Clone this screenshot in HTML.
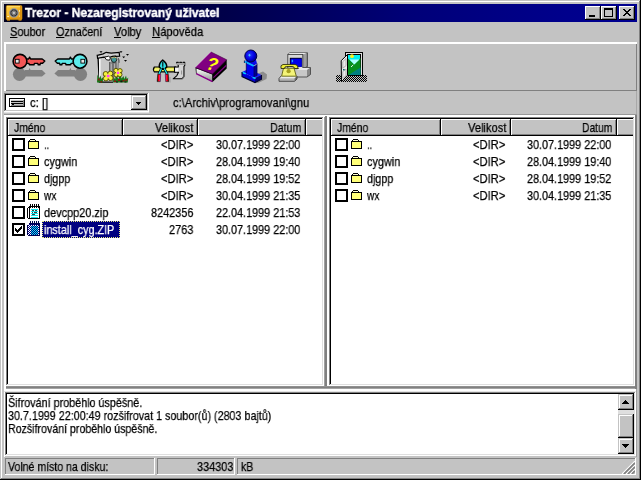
<!DOCTYPE html>
<html lang="cs"><head><meta charset="utf-8"><title>Trezor - Nezaregistrovaný uživatel</title>
<style>
html,body{margin:0;padding:0}
body{width:641px;height:480px;overflow:hidden;background:#c3c3c3;position:relative;font-family:"Liberation Sans",sans-serif}
#w{position:absolute;left:0;top:0;width:641px;height:480px;overflow:hidden;background:#c3c3c3}
#w div,#w svg,#w span.t{position:absolute}
#w span.t{white-space:pre;line-height:16px;height:16px;will-change:transform;-webkit-text-stroke:0.25px}
#w u{text-decoration:underline;text-underline-offset:1px}
</style></head><body><div id="w">
<div style="left:1px;top:1px;width:639px;height:1px;background:#fff;"></div>
<div style="left:1px;top:1px;width:1px;height:478px;background:#fff;"></div>
<div style="left:1px;top:478px;width:639px;height:1px;background:#808080;"></div>
<div style="left:639px;top:1px;width:1px;height:478px;background:#808080;"></div>
<div style="left:0px;top:479px;width:641px;height:1px;background:#000;"></div>
<div style="left:640px;top:0px;width:1px;height:480px;background:#000;"></div>
<div style="left:4px;top:4px;width:633px;height:18px;background:linear-gradient(to right,#00001e 0%,#00004a 35%,#000078 64%,#00008c 89%,#000090 100%);"></div>
<svg style="left:5px;top:4px" width="18" height="18" viewBox="5 4 18 18">
<defs><linearGradient id="sg" x1="0" y1="0" x2="1" y2="1"><stop offset="0" stop-color="#ffd040"/><stop offset="1" stop-color="#e89c10"/></linearGradient>
<radialGradient id="dg"><stop offset="0" stop-color="#f0f0f0"/><stop offset=".35" stop-color="#707070"/><stop offset=".7" stop-color="#303030"/><stop offset="1" stop-color="#909090"/></radialGradient></defs>
<rect x="7" y="19" width="3" height="1.6" fill="#d89010"/><rect x="18.5" y="19" width="3" height="1.6" fill="#d89010"/>
<rect x="6.2" y="5.6" width="15.8" height="14" rx="1.2" fill="url(#sg)" stroke="#c88808" stroke-width=".6"/>
<rect x="20" y="6" width="1.6" height="13" fill="#d89010"/>
<rect x="7" y="17.6" width="14" height="1.2" fill="#d89010"/>
<rect x="7.2" y="16" width="1.8" height=".9" fill="#fff2c0"/>
<circle cx="13.900" cy="12.900" r="4.400" fill="url(#dg)" stroke="#9a9aa0" stroke-width=".800"/>
<path d="M13.900 9.500v6.800M10.500 12.900h6.800M11.500 10.500l4.800 4.800M16.300 10.500l-4.800 4.800" stroke="#c8c8c8" stroke-width=".500" opacity=".700"/>
<rect x="7" y="6.200" width="13" height="1" fill="#ffe070"/>
<rect x="19" y="10" width=".900" height="1.800" fill="#fff0b0"/><rect x="19" y="15.600" width=".900" height=".900" fill="#fff0b0"/>
</svg>
<span class="t" style="left:24.50px;top:4.50px;font-size:13px;font-weight:bold;color:#fff;transform:scale(0.9242,1.0);transform-origin:0 0;-webkit-text-stroke:0.45px #fff;">Trezor - Nezaregistrovaný uživatel</span>
<div style="left:585px;top:6px;width:16px;height:14px;background:#c3c3c3;"></div>
<div style="left:585px;top:6px;width:15px;height:1px;background:#fff;"></div>
<div style="left:585px;top:6px;width:1px;height:13px;background:#fff;"></div>
<div style="left:585px;top:19px;width:16px;height:1px;background:#000;"></div>
<div style="left:600px;top:6px;width:1px;height:14px;background:#000;"></div>
<div style="left:586px;top:18px;width:14px;height:1px;background:#808080;"></div>
<div style="left:599px;top:7px;width:1px;height:12px;background:#808080;"></div>
<div style="left:601px;top:6px;width:16px;height:14px;background:#c3c3c3;"></div>
<div style="left:601px;top:6px;width:15px;height:1px;background:#fff;"></div>
<div style="left:601px;top:6px;width:1px;height:13px;background:#fff;"></div>
<div style="left:601px;top:19px;width:16px;height:1px;background:#000;"></div>
<div style="left:616px;top:6px;width:1px;height:14px;background:#000;"></div>
<div style="left:602px;top:18px;width:14px;height:1px;background:#808080;"></div>
<div style="left:615px;top:7px;width:1px;height:12px;background:#808080;"></div>
<div style="left:619px;top:6px;width:16px;height:14px;background:#c3c3c3;"></div>
<div style="left:619px;top:6px;width:15px;height:1px;background:#fff;"></div>
<div style="left:619px;top:6px;width:1px;height:13px;background:#fff;"></div>
<div style="left:619px;top:19px;width:16px;height:1px;background:#000;"></div>
<div style="left:634px;top:6px;width:1px;height:14px;background:#000;"></div>
<div style="left:620px;top:18px;width:14px;height:1px;background:#808080;"></div>
<div style="left:633px;top:7px;width:1px;height:12px;background:#808080;"></div>
<div style="left:589px;top:15px;width:6px;height:2px;background:#000;"></div>
<div style="left:604px;top:8px;width:9px;height:9px;background:#000;"></div>
<div style="left:605px;top:10px;width:7px;height:6px;background:#c3c3c3;"></div>
<svg style="left:623px;top:9px" width="8" height="7" viewBox="0 0 8 7" shape-rendering="crispEdges"><path d="M0 0h2v1h-2zM6 0h2v1h-2zM1 1h2v1h-2zM5 1h2v1h-2zM2 2h4v1h-4zM3 3h2v1h-2zM2 4h4v1h-4zM1 5h2v1h-2zM5 5h2v1h-2zM0 6h2v1h-2zM6 6h2v1h-2z" fill="#000"/></svg>
<span class="t" style="left:9.50px;top:23.50px;font-size:13px;color:#000;transform:scale(0.8421,1.0);transform-origin:0 0;"><u>S</u>oubor</span>
<span class="t" style="left:55.50px;top:23.50px;font-size:13px;color:#000;transform:scale(0.8321,1.0);transform-origin:0 0;"><u>O</u>značení</span>
<span class="t" style="left:113.50px;top:23.50px;font-size:13px;color:#000;transform:scale(0.8585,1.0);transform-origin:0 0;"><u>V</u>olby</span>
<span class="t" style="left:151.50px;top:23.50px;font-size:13px;color:#000;transform:scale(0.8656,1.0);transform-origin:0 0;"><u>N</u>ápověda</span>
<div style="left:4px;top:42px;width:633px;height:2px;background:#fff;"></div>
<div style="left:4px;top:42px;width:2px;height:49px;background:#fff;"></div>
<div style="left:6px;top:90px;width:631px;height:1px;background:#808080;"></div>
<div style="left:636px;top:44px;width:1px;height:47px;background:#808080;"></div>
<div style="left:636px;top:91px;width:1px;height:24px;background:#a8a8a8;"></div>
<svg style="left:0;top:44px" width="641" height="46" viewBox="0 44 641 46">
<defs>
<pattern id="chk" width="2" height="2" patternUnits="userSpaceOnUse"><rect width="2" height="2" fill="#c0c0c0"/><rect width="1" height="1" fill="#000"/><rect x="1" y="1" width="1" height="1" fill="#000"/></pattern>
<g id="key">
 <circle cx="19.5" cy="74.3" r="6.6" fill="#808080"/>
 <path d="M25 70h3.6l1-2 1 2h11.4l3.6 3.4-3.6 3.2h-17z" fill="#808080"/>
</g>
<g id="keyb">
 <path d="M26 59h2.6l1-1.8 1 1.8h11.6l2.6 2-2.2 2.2h-2.2l-.4 1.6h-1.8l-.4-1.4h-3.4l-.4 1.4h-4.6l-.6-1.4h-2.8z" stroke="#000" stroke-width="1.400" stroke-linejoin="round"/>
 <circle cx="20" cy="61.300" r="6.900" stroke="#000" stroke-width="1.600"/>
 <rect x="15.3" y="59.3" width="3.8" height="3.8" fill="#e8e8e8" stroke="#000" stroke-width=".9"/>
</g>
<radialGradient id="ball" cx=".4" cy=".4" r=".65"><stop offset="0" stop-color="#2838ff"/><stop offset=".6" stop-color="#0000e0"/><stop offset="1" stop-color="#000070"/></radialGradient>
<linearGradient id="hl"><stop offset="0" stop-color="#300000"/><stop offset=".450" stop-color="#ff0000"/><stop offset="1" stop-color="#ff30ff"/></linearGradient>
<linearGradient id="hr"><stop offset="0" stop-color="#ff20d0"/><stop offset=".500" stop-color="#ff0000"/><stop offset="1" stop-color="#300000"/></linearGradient>
<linearGradient id="pg" x1="0" y1="0" x2="0" y2="1"><stop offset="0" stop-color="#fff"/><stop offset="1" stop-color="#909090"/></linearGradient>
</defs>
<!-- red key -->
<use href="#key"/>
<use href="#keyb" fill="#f25656"/>
<!-- cyan key (mirrored) -->
<g transform="translate(100 0) scale(-1 1)"><use href="#key"/><use href="#keyb" fill="#5ceaea"/></g>

<!-- trash with flowers -->
<g>
 <path d="M98 57L99.3 82h18.2l1-25z" fill="#c8c8c8"/>
 <path d="M98 56.5L99.3 82.2H113" fill="none" stroke="#000" stroke-width="1.3"/>
 <path d="M99.8 58v23" stroke="#fff" stroke-width="1.4"/>
 <path d="M118.4 58l-.6 14" stroke="#707070" stroke-width="1"/>
 <rect x="109" y="62" width="7.400" height="19.500" fill="#8c8c8c"/>
 <path d="M109.600 62v19.500M113 62v19.500M116 62v19.500" stroke="#606060" stroke-width="1.100"/><path d="M111.300 64v17M114.600 64v17" stroke="#b8b8b8" stroke-width=".900"/>
 <path d="M97.2 55.3l6-1.4 3-1.6 5 .8 8-.6.4 3.6-8 .4-3 1.2-5-.6-6 1.2z" fill="#d0d0d0" stroke="#000" stroke-width="1.200"/>
 <path d="M104.5 57.2l4-1 2 1.6-1 2.4-3-.4z" fill="#fff" stroke="#000" stroke-width=".9"/>
 <path d="M118 58.5q1.8 1.8 1 4.2" fill="none" stroke="#606060" stroke-width="1.3"/>
 <circle cx="114" cy="59.700" r="2.700" fill="#409898" stroke="#181818" stroke-width=".900"/>
 <path d="M111.600 58.200q2.400-2.600 5-.200" fill="none" stroke="#e8e090" stroke-width=".900"/>
 <path d="M111 57.4l1.2-1.2 3.4-.2 1.6 1.4" fill="none" stroke="#000" stroke-width=".8"/>
 <!-- flies -->
 <path d="M99.5 51.3h3l-1.5 1.8zM119.5 51.3h3l-1.5 1.8zM126 54h3l-1.5 1.8zM122.2 56.4h3l-1.5 1.8zM124 60h3l-1.5 1.8z" fill="#000"/>
 <!-- grass -->
 <path d="M97 82.5l.4-8 1.6 4 1.4-3 1 3.4 1.8-2-.4 5.6z" fill="#187818"/>
 <path d="M113 82.6l.6-5 1.8 2 1-4 2 3.4 1.6-5 1.6 4.4 1.8-2.4 1 3 1.6-3.6.8 3.6 1.4-1.4-.4 5z" fill="#187818"/>
 <path d="M114 80.5h2v1.6h-2zM118 79h2v2h-2zM122.5 80h2v1.6h-2zM98 78.5h1.6v2H98zM100.5 81h1.6v1.4h-1.6zM125.5 79h1.6v2h-1.6z" fill="#901010"/>
 <path d="M116 81.4h2v1.2h-2zM120.4 80.6h2v1.6h-2zM124.5 81.6h2v1h-2z" fill="#101010"/>
 <!-- flowers -->
 <g fill="#f4f040" stroke="#504800" stroke-width=".900">
  <circle cx="105.7" cy="74" r="2.5"/><circle cx="110.3" cy="73.6" r="2.5"/><circle cx="105.9" cy="78.4" r="2.5"/><circle cx="110.6" cy="78" r="2.5"/>
  <circle cx="116" cy="70.5" r="2.2"/><circle cx="120" cy="70.8" r="2.2"/><circle cx="116.2" cy="74.8" r="2.2"/><circle cx="119.8" cy="74.6" r="2.2"/>
 </g>
 <rect x="105.6" y="73.8" width="5" height="4.6" fill="#f4f040"/><rect x="116" y="70.6" width="4" height="4.2" fill="#f4f040"/>
 <rect x="106.9" y="74.8" width="2.6" height="2.4" fill="#ff40ff"/><rect x="116.9" y="71.7" width="2.3" height="2.3" fill="#ff40ff"/>
</g>

<!-- tools -->
<g>
 <path d="M154.400 67h21v4.800h-21q-2-2.400 0-4.800z" fill="#ecec50" stroke="#000" stroke-width="1.200"/>
 <path d="M155.500 69.400h19" stroke="#fffcc0" stroke-width="1.200" stroke-dasharray="1 1"/>
 <path d="M176.600 62.400h1.700v1.500h1.500v-1.500h1.700v1.500h1.500v-1.500h1.700v3.200l-.800 1v9.600l-1.800 2.600h-8.900l3.700-3.200 1.600-3.400h-4v-5.200h3.800v-1.600z" fill="#d4d4d4" stroke="#000" stroke-width="1.100" stroke-linejoin="round"/>
 <path d="M176.600 62.900h8.100v2h-8.100z" fill="#a8a8a8"/>
 <path d="M175.200 68h3v3.400h-3z" fill="#f4f4f4"/>
 <path d="M184 66.500v10l-1.800 2.400" fill="none" stroke="#606060" stroke-width="1.300"/>
 <path d="M181.600 70.500v4" stroke="#909090" stroke-width="1"/>
 <!-- pliers -->
 <path d="M162.700 60.200c-2.400 1.800-3.700 4-3.400 6.800l2.200 2.200h2.600l2.600-2.200c.300-2.800-1.400-5-4-6.800z" fill="#30e0e8" stroke="#000" stroke-width="1.500"/>
 <path d="M164.200 68.500l3.200 6M161.400 68.500l-2.700 6" fill="none" stroke="#000" stroke-width="2.600"/>
 <path d="M164.200 68.500l3.200 6M161.400 68.500l-2.700 6" fill="none" stroke="#18e8f0" stroke-width="1.300"/>
 <path d="M162.800 61.800v5" stroke="#000" stroke-width="1.100"/>
 <circle cx="162.800" cy="68.400" r="1" fill="#000"/>
 <path d="M157.700 74.300h3l-.400 7.300h-3.200z" fill="url(#hl)" stroke="#000" stroke-width=".500"/>
 <path d="M165.300 74.300h3l.600 7.300h-3.200z" fill="url(#hr)" stroke="#000" stroke-width=".500"/>
 <path d="M170 77v5.500" stroke="#9c9c9c" stroke-width="1"/>
</g>

<!-- help book -->
<g>
 <path d="M195.500 67.600l.500 6 16.500 8.300 14.200-13.400v-8.700z" fill="#000"/>
 <path d="M196.400 68.400l15.800 6.200v6.600l-15.600-7.600z" fill="url(#pg)"/>
 <path d="M196.200 73.600l16.300 8" stroke="#900090" stroke-width="1.300"/>
 <path d="M213.400 77.600l13-12.400" stroke="#800080" stroke-width="1.200"/>
 <path d="M211 52l15.700 7.800-14.200 14.200-17-6.400z" fill="#800080" stroke="#400040" stroke-width=".600"/>
 <path d="M195.500 67.600l15.500-15.600" stroke="#c050c0" stroke-width=".800"/>
 <text x="0" y="6.200" text-anchor="middle" font-family="Liberation Sans, sans-serif" font-weight="bold" font-size="18" fill="#ffff10" transform="translate(212.400 64) rotate(14) skewX(-12)">?</text>
</g>

<!-- info -->
<g>
 <path d="M258 73.500l5-2 4 3-.500 4.500-8.500 4-4-1z" fill="#8c8c8c"/>
 <path d="M242 72l6.500-3 13 6-6.500 3z" fill="#1818ff"/>
 <path d="M242 72l13 6v4.600l-13-6z" fill="#0000d8"/>
 <path d="M255 78l6.500-3v4.200l-6.500 3.400z" fill="#000078"/>
 <path d="M242.400 72.300l3.400 1.600" stroke="#00d0ff" stroke-width="1.600"/>
 <path d="M252.600 77.200l3 1.200" stroke="#00d0ff" stroke-width="1.600"/>
 <path d="M246.300 62.500l7.700 3.700v11l-7.700-3.800z" fill="#0000f0"/>
 <path d="M254 66.200l3-1.800v11.400l-3 1.400z" fill="#000090"/>
 <path d="M244.500 61l9.500 4.500 3-2-1-3.500h-8z" fill="#0808e8"/>
 <path d="M244.500 61.500l9.300 4.500" stroke="#00b8ff" stroke-width="1.800"/>
 <path d="M244.400 60.500v2.500M257 63.500v12" stroke="#000050" stroke-width=".800"/>
 <circle cx="250.800" cy="56" r="6" fill="url(#ball)" stroke="#000048" stroke-width="1"/>
 <path d="M248.300 55.200h2.400M249.500 54v2.400" stroke="#40c8ff" stroke-width=".900"/>
 <path d="M242 72v4.600l13 6 6.500-3.400v-4.200" fill="none" stroke="#000030" stroke-width="1.100"/><path d="M246.300 62.500v10.500M254 66.500v10.500" stroke="#000060" stroke-width=".800"/>
</g>

<!-- phone + computer -->
<g>
 <path d="M288 54.500l2-1.800h17.300v14l-4.500 2z" fill="#a0a0a0" stroke="#303030" stroke-width=".900"/>
 <path d="M288 54.500l2-1.800h17.300l-4.500 1.800z" fill="#f0f0f0"/>
 <rect x="287.800" y="54.400" width="15" height="14.200" fill="#d8d8d8" stroke="#404040" stroke-width=".900"/>
 <rect x="289.800" y="57.800" width="12" height="9" fill="#000"/>
 <rect x="290.600" y="58.600" width="11.200" height="8.200" fill="#0000e8"/>
 <rect x="291.700" y="59.800" width="1.400" height="2.400" fill="#20a0ff"/>
 <path d="M297 70l3-2.500h10.500l-3.500 2.500z" fill="#e8e8e8"/>
 <rect x="297" y="70" width="10" height="7" fill="#c8c8c8"/>
 <path d="M307 70l3.500-2.500v7l-3.500 2.500z" fill="#888"/>
 <path d="M297 77h10l3.500-2.500v-7h-8" fill="none" stroke="#484848" stroke-width=".900"/>
 <path d="M281 76h16l-2.500 2.500h-15.500z" fill="#ececec"/>
 <rect x="279" y="78.500" width="15.500" height="2.800" fill="#b4b4b4"/>
 <path d="M294.500 78.500l2.500-2.500v3l-2.500 2.300z" fill="#707070"/>
 <path d="M281 76l-2 2.500v2.800h15.500l2.500-2.300v-3" fill="none" stroke="#404040" stroke-width=".900"/>
 <path d="M283.500 68.200h10.500l2.300 8h-14.700z" fill="#f4f478" stroke="#505000" stroke-width=".800"/>
 <circle cx="288.600" cy="71.200" r="2.100" fill="#a8a020"/>
 <path d="M281 68.500q-1-3.500 2-4l12-.100q3.500.500 3 4.100h-3.500q0-2-2.500-2h-5.500q-2 0-2 2z" fill="#ecec38" stroke="#202000" stroke-width=".800"/>
</g>

<!-- exit door -->
<g>
 <rect x="336" y="75" width="31" height="7" fill="url(#chk)" shape-rendering="crispEdges"/>
 <rect x="345.500" y="52.500" width="17" height="23" fill="#e0e0e0" stroke="#000" stroke-width="1"/>
 <rect x="347.500" y="54.500" width="13" height="21" fill="#00f0f0" stroke="#000" stroke-width="1"/>
 <path d="M348 58.500l6.300 5.800 6.200-6.300v17h-12.500z" fill="#089020"/>
 <path d="M349.500 59.600h10l-5.200 4.800z" fill="#b0ffff"/>
 <path d="M360.500 67.500v7.500h-12z" fill="#008080"/>
 <circle cx="352" cy="56.200" r="1.900" fill="#f8f020"/>
 <path d="M353.300 64.800l-2.300 2.200" stroke="#fff" stroke-width=".900"/>
 <path d="M347.500 54.500l-6.300 6.200.3 21 6-6.500z" fill="#ececec" stroke="#000" stroke-width="1"/>
 <path d="M346 58.500l-3.200 3.200v6.500l3.200-2.500zM346 69l-3.200 2.600v7l3.200-3.500z" fill="none" stroke="#a0a0a0" stroke-width=".800"/>
 <rect x="343" y="69" width="1.600" height="1.400" fill="#006868"/>
</g>
</svg>
<div style="left:4px;top:93px;width:145px;height:19px;background:#fff;"></div>
<div style="left:4px;top:93px;width:145px;height:1px;background:#808080;"></div>
<div style="left:4px;top:93px;width:1px;height:19px;background:#808080;"></div>
<div style="left:5px;top:94px;width:143px;height:1px;background:#000;"></div>
<div style="left:5px;top:94px;width:1px;height:17px;background:#000;"></div>
<div style="left:5px;top:110px;width:143px;height:1px;background:#c3c3c3;"></div>
<div style="left:147px;top:94px;width:1px;height:17px;background:#c3c3c3;"></div>
<div style="left:4px;top:111px;width:145px;height:1px;background:#fff;"></div>
<div style="left:148px;top:93px;width:1px;height:19px;background:#fff;"></div>
<div style="left:4px;top:112px;width:145px;height:1px;background:#e4e4e4;"></div>
<div style="left:131px;top:95px;width:16px;height:15px;background:#c3c3c3;"></div>
<div style="left:131px;top:95px;width:15px;height:1px;background:#c3c3c3;"></div>
<div style="left:131px;top:95px;width:1px;height:14px;background:#c3c3c3;"></div>
<div style="left:132px;top:96px;width:13px;height:1px;background:#fff;"></div>
<div style="left:132px;top:96px;width:1px;height:12px;background:#fff;"></div>
<div style="left:131px;top:109px;width:16px;height:1px;background:#000;"></div>
<div style="left:146px;top:95px;width:1px;height:15px;background:#000;"></div>
<div style="left:132px;top:108px;width:14px;height:1px;background:#808080;"></div>
<div style="left:145px;top:96px;width:1px;height:13px;background:#808080;"></div>
<svg style="left:136px;top:102px" width="5" height="3" viewBox="0 0 5 3" shape-rendering="crispEdges"><path d="M0 0h5v1h-5zM1 1h3v1h-3zM2 2h1v1h-1z" fill="#000"/></svg>
<svg style="left:9px;top:98px" width="16" height="9" viewBox="0 0 16 9" shape-rendering="crispEdges">
<rect x="0" y="0" width="16" height="9" fill="#000"/><rect x="1" y="1" width="14" height="7" fill="#c0c0c0"/>
<rect x="1" y="1" width="14" height="1" fill="#fff"/><rect x="1" y="1" width="1" height="7" fill="#fff"/>
<rect x="2" y="3" width="12" height="1" fill="#000"/><rect x="2" y="5" width="12" height="1" fill="#000"/>
<rect x="3" y="6" width="2" height="1" fill="#000"/>
<rect x="2" y="7" width="13" height="1" fill="#808080"/><rect x="14" y="2" width="1" height="6" fill="#808080"/>
</svg>
<span class="t" style="left:29.50px;top:94.50px;font-size:13px;color:#000;transform:scale(0.8735,1.0);transform-origin:0 0;">c: []</span>
<span class="t" style="left:172.50px;top:94.50px;font-size:13px;color:#000;transform:scale(0.8613,1.0);transform-origin:0 0;">c:\Archiv\programovani\gnu</span>
<div style="left:4px;top:114px;width:633px;height:1px;background:#989898;"></div>
<div style="left:4px;top:115px;width:631px;height:2px;background:#fff;"></div>
<div style="left:4px;top:115px;width:2px;height:277px;background:#fff;"></div>
<div style="left:635px;top:115px;width:2px;height:274px;background:#808080;"></div>
<div style="left:6px;top:117px;width:318px;height:269px;background:#fff;"></div>
<div style="left:6px;top:117px;width:318px;height:1px;background:#808080;"></div>
<div style="left:6px;top:117px;width:1px;height:269px;background:#808080;"></div>
<div style="left:7px;top:118px;width:316px;height:1px;background:#000;"></div>
<div style="left:7px;top:118px;width:1px;height:267px;background:#000;"></div>
<div style="left:7px;top:384px;width:316px;height:1px;background:#dfdfdf;"></div>
<div style="left:322px;top:118px;width:1px;height:267px;background:#dfdfdf;"></div>
<div style="left:6px;top:385px;width:318px;height:1px;background:#fff;"></div>
<div style="left:323px;top:117px;width:1px;height:269px;background:#fff;"></div>
<div style="left:8px;top:119px;width:314px;height:17px;background:#c3c3c3;"></div>
<div style="left:8px;top:135px;width:314px;height:1px;background:#000;"></div>
<div style="left:8px;top:119px;width:114px;height:1px;background:#fff;"></div>
<div style="left:8px;top:119px;width:1px;height:16px;background:#fff;"></div>
<div style="left:122px;top:119px;width:1px;height:17px;background:#000;"></div>
<div style="left:9px;top:134px;width:113px;height:1px;background:#808080;"></div>
<div style="left:121px;top:120px;width:1px;height:15px;background:#808080;"></div>
<div style="left:123px;top:119px;width:74px;height:1px;background:#fff;"></div>
<div style="left:123px;top:119px;width:1px;height:16px;background:#fff;"></div>
<div style="left:197px;top:119px;width:1px;height:17px;background:#000;"></div>
<div style="left:124px;top:134px;width:73px;height:1px;background:#808080;"></div>
<div style="left:196px;top:120px;width:1px;height:15px;background:#808080;"></div>
<div style="left:198px;top:119px;width:107px;height:1px;background:#fff;"></div>
<div style="left:198px;top:119px;width:1px;height:16px;background:#fff;"></div>
<div style="left:305px;top:119px;width:1px;height:17px;background:#000;"></div>
<div style="left:199px;top:134px;width:106px;height:1px;background:#808080;"></div>
<div style="left:304px;top:120px;width:1px;height:15px;background:#808080;"></div>
<div style="left:306px;top:119px;width:16px;height:1px;background:#fff;"></div>
<div style="left:306px;top:119px;width:1px;height:16px;background:#fff;"></div>
<div style="left:307px;top:134px;width:15px;height:1px;background:#808080;"></div>
<span class="t" style="left:13.50px;top:119.50px;font-size:13px;color:#000;transform:scale(0.8022,1.0);transform-origin:0 0;">Jméno</span>
<span class="t" style="left:154.50px;top:119.50px;font-size:13px;color:#000;transform:scale(0.8549,1.0);transform-origin:0 0;">Velikost</span>
<span class="t" style="left:269.50px;top:119.50px;font-size:13px;color:#000;transform:scale(0.8175,1.0);transform-origin:0 0;">Datum</span>
<div style="left:329px;top:117px;width:306px;height:269px;background:#fff;"></div>
<div style="left:329px;top:117px;width:306px;height:1px;background:#808080;"></div>
<div style="left:329px;top:117px;width:1px;height:269px;background:#808080;"></div>
<div style="left:330px;top:118px;width:304px;height:1px;background:#000;"></div>
<div style="left:330px;top:118px;width:1px;height:267px;background:#000;"></div>
<div style="left:330px;top:384px;width:304px;height:1px;background:#dfdfdf;"></div>
<div style="left:633px;top:118px;width:1px;height:267px;background:#dfdfdf;"></div>
<div style="left:329px;top:385px;width:306px;height:1px;background:#fff;"></div>
<div style="left:634px;top:117px;width:1px;height:269px;background:#fff;"></div>
<div style="left:331px;top:119px;width:302px;height:17px;background:#c3c3c3;"></div>
<div style="left:331px;top:135px;width:302px;height:1px;background:#000;"></div>
<div style="left:331px;top:119px;width:109px;height:1px;background:#fff;"></div>
<div style="left:331px;top:119px;width:1px;height:16px;background:#fff;"></div>
<div style="left:440px;top:119px;width:1px;height:17px;background:#000;"></div>
<div style="left:332px;top:134px;width:108px;height:1px;background:#808080;"></div>
<div style="left:439px;top:120px;width:1px;height:15px;background:#808080;"></div>
<div style="left:441px;top:119px;width:69px;height:1px;background:#fff;"></div>
<div style="left:441px;top:119px;width:1px;height:16px;background:#fff;"></div>
<div style="left:510px;top:119px;width:1px;height:17px;background:#000;"></div>
<div style="left:442px;top:134px;width:68px;height:1px;background:#808080;"></div>
<div style="left:509px;top:120px;width:1px;height:15px;background:#808080;"></div>
<div style="left:511px;top:119px;width:105px;height:1px;background:#fff;"></div>
<div style="left:511px;top:119px;width:1px;height:16px;background:#fff;"></div>
<div style="left:616px;top:119px;width:1px;height:17px;background:#000;"></div>
<div style="left:512px;top:134px;width:104px;height:1px;background:#808080;"></div>
<div style="left:615px;top:120px;width:1px;height:15px;background:#808080;"></div>
<div style="left:617px;top:119px;width:16px;height:1px;background:#fff;"></div>
<div style="left:617px;top:119px;width:1px;height:16px;background:#fff;"></div>
<div style="left:618px;top:134px;width:15px;height:1px;background:#808080;"></div>
<span class="t" style="left:336.50px;top:119.50px;font-size:13px;color:#000;transform:scale(0.8022,1.0);transform-origin:0 0;">Jméno</span>
<span class="t" style="left:467.50px;top:119.50px;font-size:13px;color:#000;transform:scale(0.8549,1.0);transform-origin:0 0;">Velikost</span>
<span class="t" style="left:581.50px;top:119.50px;font-size:13px;color:#000;transform:scale(0.7913,1.0);transform-origin:0 0;">Datum</span>
<svg style="left:0;top:0" width="0" height="0"><defs>
<g id="ifold" shape-rendering="crispEdges">
 <path d="M4 3h5v1h1v1h3v8h-11v-8h1v-1h1z" fill="#000"/>
 <path d="M4 4h5v1h-5z" fill="#ffffd0"/>
 <path d="M3 6h9v6h-9z" fill="#ffff78"/>
</g>
<g id="izip" shape-rendering="crispEdges">
 <path d="M3 2h11v13h-12v-1h-1v-10h1v-1h1z" fill="#000"/>
 <path d="M4 3h9v11h-9z" fill="#fff"/><path d="M2 4h1v10h-1z" fill="#fff"/>
 <path d="M4 0h1v4h-1zM6 0h1v4h-1zM8 0h1v4h-1zM10 0h1v4h-1zM12 0h1v4h-1z" fill="#000"/>
 <path d="M5 5h7v1h-7zM5 7h7v1h-7zM5 9h7v1h-7zM5 11h7v1h-7zM5 13h7v1h-7z" fill="#10e8f0"/>
 <path d="M6 6h2v1h-2zM9 6h2v1h-2zM6 8h1v1h-1zM8 8h3v1h-3zM6 10h3v1h-3z" fill="#404040"/>
</g>
<pattern id="selp" width="2" height="2" patternUnits="userSpaceOnUse"><rect width="2" height="2" fill="#fff"/><rect width="1" height="1" fill="#000080"/><rect x="1" y="1" width="1" height="1" fill="#000080"/></pattern>
<pattern id="selc" width="2" height="2" patternUnits="userSpaceOnUse"><rect width="2" height="2" fill="#10e8f0"/><rect width="1" height="1" fill="#000080"/><rect x="1" y="1" width="1" height="1" fill="#000080"/></pattern>
<g id="izips" shape-rendering="crispEdges">
 <path d="M3 2h11v13h-12v-1h-1v-10h1v-1h1z" fill="#000050"/>
 <path d="M2 3h11v11h-11z" fill="url(#selp)"/>
 <path d="M4 0h1v4h-1zM6 0h1v4h-1zM8 0h1v4h-1zM10 0h1v4h-1zM12 0h1v4h-1z" fill="#000050"/>
 <path d="M5 5h7v9h-7z" fill="url(#selc)"/>
</g>
</defs></svg>
<div style="left:12px;top:138px;width:13px;height:13px;background:#000;"></div>
<div style="left:14px;top:140px;width:9px;height:9px;background:#fff;"></div>
<svg style="left:26px;top:136px" width="16" height="16" viewBox="0 0 16 16"><use href="#ifold"/></svg>
<span class="t" style="left:43.50px;top:136.50px;font-size:13px;color:#000;transform:scale(0.7336,1.0);transform-origin:0 0;">..</span>
<span class="t" style="left:160.50px;top:136.50px;font-size:13px;color:#000;transform:scale(0.8597,1.0);transform-origin:0 0;">&lt;DIR&gt;</span>
<span class="t" style="left:215.50px;top:136.50px;font-size:13px;color:#000;transform:scale(0.8330,1.0);transform-origin:0 0;">30.07.1999 22:00</span>
<div style="left:12px;top:155px;width:13px;height:13px;background:#000;"></div>
<div style="left:14px;top:157px;width:9px;height:9px;background:#fff;"></div>
<svg style="left:26px;top:153px" width="16" height="16" viewBox="0 0 16 16"><use href="#ifold"/></svg>
<span class="t" style="left:43.50px;top:153.50px;font-size:13px;color:#000;transform:scale(0.8381,1.0);transform-origin:0 0;">cygwin</span>
<span class="t" style="left:160.50px;top:153.50px;font-size:13px;color:#000;transform:scale(0.8597,1.0);transform-origin:0 0;">&lt;DIR&gt;</span>
<span class="t" style="left:215.50px;top:153.50px;font-size:13px;color:#000;transform:scale(0.8330,1.0);transform-origin:0 0;">28.04.1999 19:40</span>
<div style="left:12px;top:172px;width:13px;height:13px;background:#000;"></div>
<div style="left:14px;top:174px;width:9px;height:9px;background:#fff;"></div>
<svg style="left:26px;top:170px" width="16" height="16" viewBox="0 0 16 16"><use href="#ifold"/></svg>
<span class="t" style="left:43.50px;top:170.50px;font-size:13px;color:#000;transform:scale(0.8269,1.0);transform-origin:0 0;">djgpp</span>
<span class="t" style="left:160.50px;top:170.50px;font-size:13px;color:#000;transform:scale(0.8597,1.0);transform-origin:0 0;">&lt;DIR&gt;</span>
<span class="t" style="left:215.50px;top:170.50px;font-size:13px;color:#000;transform:scale(0.8330,1.0);transform-origin:0 0;">28.04.1999 19:52</span>
<div style="left:12px;top:189px;width:13px;height:13px;background:#000;"></div>
<div style="left:14px;top:191px;width:9px;height:9px;background:#fff;"></div>
<svg style="left:26px;top:187px" width="16" height="16" viewBox="0 0 16 16"><use href="#ifold"/></svg>
<span class="t" style="left:43.50px;top:187.50px;font-size:13px;color:#000;transform:scale(0.7742,1.0);transform-origin:0 0;">wx</span>
<span class="t" style="left:160.50px;top:187.50px;font-size:13px;color:#000;transform:scale(0.8597,1.0);transform-origin:0 0;">&lt;DIR&gt;</span>
<span class="t" style="left:215.50px;top:187.50px;font-size:13px;color:#000;transform:scale(0.8330,1.0);transform-origin:0 0;">30.04.1999 21:35</span>
<div style="left:12px;top:206px;width:13px;height:13px;background:#000;"></div>
<div style="left:14px;top:208px;width:9px;height:9px;background:#fff;"></div>
<svg style="left:26px;top:204px" width="16" height="16" viewBox="0 0 16 16"><use href="#izip"/></svg>
<span class="t" style="left:43.50px;top:204.50px;font-size:13px;color:#000;transform:scale(0.8393,1.0);transform-origin:0 0;">devcpp20.zip</span>
<span class="t" style="left:150.50px;top:204.50px;font-size:13px;color:#000;transform:scale(0.8358,1.0);transform-origin:0 0;">8242356</span>
<span class="t" style="left:215.50px;top:204.50px;font-size:13px;color:#000;transform:scale(0.8330,1.0);transform-origin:0 0;">22.04.1999 21:53</span>
<div style="left:12px;top:223px;width:13px;height:13px;background:#000;"></div>
<div style="left:14px;top:225px;width:9px;height:9px;background:#fff;"></div>
<svg style="left:15px;top:226px" width="7" height="7" viewBox="0 0 7 7" shape-rendering="crispEdges"><path d="M0 2h1v3h-1zM1 3h1v3h-1zM2 4h1v3h-1zM3 3h1v3h-1zM4 2h1v3h-1zM5 1h1v3h-1zM6 0h1v3h-1z" fill="#000"/></svg>
<svg style="left:26px;top:221px" width="16" height="16" viewBox="0 0 16 16"><use href="#izips"/></svg>
<div style="left:42px;top:221px;width:78px;height:17px;background:#000080;outline:1px dotted #e8e880;outline-offset:-1px;"></div>
<span class="t" style="left:43.50px;top:221.50px;font-size:13px;color:#fff;transform:scale(0.8317,1.0);transform-origin:0 0;">install_cyg.ZIP</span>
<span class="t" style="left:168.50px;top:221.50px;font-size:13px;color:#000;transform:scale(0.8403,1.0);transform-origin:0 0;">2763</span>
<span class="t" style="left:215.50px;top:221.50px;font-size:13px;color:#000;transform:scale(0.8330,1.0);transform-origin:0 0;">30.07.1999 22:00</span>
<div style="left:335px;top:138px;width:13px;height:13px;background:#000;"></div>
<div style="left:337px;top:140px;width:9px;height:9px;background:#fff;"></div>
<svg style="left:349px;top:136px" width="16" height="16" viewBox="0 0 16 16"><use href="#ifold"/></svg>
<span class="t" style="left:366.50px;top:136.50px;font-size:13px;color:#000;transform:scale(0.7336,1.0);transform-origin:0 0;">..</span>
<span class="t" style="left:472.50px;top:136.50px;font-size:13px;color:#000;transform:scale(0.8597,1.0);transform-origin:0 0;">&lt;DIR&gt;</span>
<span class="t" style="left:526.50px;top:136.50px;font-size:13px;color:#000;transform:scale(0.8330,1.0);transform-origin:0 0;">30.07.1999 22:00</span>
<div style="left:335px;top:155px;width:13px;height:13px;background:#000;"></div>
<div style="left:337px;top:157px;width:9px;height:9px;background:#fff;"></div>
<svg style="left:349px;top:153px" width="16" height="16" viewBox="0 0 16 16"><use href="#ifold"/></svg>
<span class="t" style="left:366.50px;top:153.50px;font-size:13px;color:#000;transform:scale(0.8381,1.0);transform-origin:0 0;">cygwin</span>
<span class="t" style="left:472.50px;top:153.50px;font-size:13px;color:#000;transform:scale(0.8597,1.0);transform-origin:0 0;">&lt;DIR&gt;</span>
<span class="t" style="left:526.50px;top:153.50px;font-size:13px;color:#000;transform:scale(0.8330,1.0);transform-origin:0 0;">28.04.1999 19:40</span>
<div style="left:335px;top:172px;width:13px;height:13px;background:#000;"></div>
<div style="left:337px;top:174px;width:9px;height:9px;background:#fff;"></div>
<svg style="left:349px;top:170px" width="16" height="16" viewBox="0 0 16 16"><use href="#ifold"/></svg>
<span class="t" style="left:366.50px;top:170.50px;font-size:13px;color:#000;transform:scale(0.8269,1.0);transform-origin:0 0;">djgpp</span>
<span class="t" style="left:472.50px;top:170.50px;font-size:13px;color:#000;transform:scale(0.8597,1.0);transform-origin:0 0;">&lt;DIR&gt;</span>
<span class="t" style="left:526.50px;top:170.50px;font-size:13px;color:#000;transform:scale(0.8330,1.0);transform-origin:0 0;">28.04.1999 19:52</span>
<div style="left:335px;top:189px;width:13px;height:13px;background:#000;"></div>
<div style="left:337px;top:191px;width:9px;height:9px;background:#fff;"></div>
<svg style="left:349px;top:187px" width="16" height="16" viewBox="0 0 16 16"><use href="#ifold"/></svg>
<span class="t" style="left:366.50px;top:187.50px;font-size:13px;color:#000;transform:scale(0.7742,1.0);transform-origin:0 0;">wx</span>
<span class="t" style="left:472.50px;top:187.50px;font-size:13px;color:#000;transform:scale(0.8597,1.0);transform-origin:0 0;">&lt;DIR&gt;</span>
<span class="t" style="left:526.50px;top:187.50px;font-size:13px;color:#000;transform:scale(0.8330,1.0);transform-origin:0 0;">30.04.1999 21:35</span>
<div style="left:324px;top:117px;width:1px;height:269px;background:#a0a0a0;"></div>
<div style="left:325px;top:116px;width:2px;height:272px;background:#808080;"></div>
<div style="left:327px;top:117px;width:2px;height:269px;background:#fff;"></div>
<div style="left:6px;top:386px;width:629px;height:1px;background:#909090;"></div>
<div style="left:6px;top:387px;width:629px;height:1px;background:#808080;"></div>
<div style="left:6px;top:388px;width:629px;height:1px;background:#a4a4a4;"></div>
<div style="left:4px;top:389px;width:632px;height:2px;background:#fff;"></div>
<div style="left:4px;top:391px;width:632px;height:1px;background:#e4e4e4;"></div>
<div style="left:5px;top:392px;width:631px;height:64px;background:#fff;"></div>
<div style="left:5px;top:392px;width:631px;height:1px;background:#808080;"></div>
<div style="left:5px;top:392px;width:1px;height:64px;background:#808080;"></div>
<div style="left:6px;top:393px;width:629px;height:1px;background:#000;"></div>
<div style="left:6px;top:393px;width:1px;height:62px;background:#000;"></div>
<div style="left:6px;top:454px;width:629px;height:1px;background:#dfdfdf;"></div>
<div style="left:634px;top:393px;width:1px;height:62px;background:#dfdfdf;"></div>
<div style="left:5px;top:455px;width:631px;height:1px;background:#fff;"></div>
<div style="left:635px;top:392px;width:1px;height:64px;background:#fff;"></div>
<div style="left:4px;top:392px;width:1px;height:65px;background:#fff;"></div>
<div style="left:636px;top:389px;width:1px;height:68px;background:#a0a0a0;"></div>
<span class="t" style="left:7.50px;top:394.50px;font-size:13px;color:#000;transform:scale(0.8296,1.0);transform-origin:0 0;">Šifrování proběhlo úspěšně.</span>
<span class="t" style="left:7.50px;top:407.50px;font-size:13px;color:#000;transform:scale(0.8262,1.0);transform-origin:0 0;">30.7.1999 22:00:49 rozšifrovat 1 soubor(ů) (2803 bajtů)</span>
<span class="t" style="left:7.50px;top:420.50px;font-size:13px;color:#000;transform:scale(0.8166,1.0);transform-origin:0 0;">Rozšifrování proběhlo úspěšně.</span>
<div style="left:618px;top:394px;width:16px;height:60px;background:#dfdfdf;"></div>
<div style="left:618px;top:394px;width:16px;height:16px;background:#c3c3c3;"></div>
<div style="left:619px;top:395px;width:13px;height:1px;background:#fff;"></div>
<div style="left:619px;top:395px;width:1px;height:13px;background:#fff;"></div>
<div style="left:618px;top:409px;width:16px;height:1px;background:#000;"></div>
<div style="left:633px;top:394px;width:1px;height:16px;background:#000;"></div>
<div style="left:619px;top:408px;width:14px;height:1px;background:#808080;"></div>
<div style="left:632px;top:395px;width:1px;height:14px;background:#808080;"></div>
<svg style="left:622px;top:400px" width="7" height="4" viewBox="0 0 7 4" shape-rendering="crispEdges"><path d="M3 0h1v1h-1zM2 1h3v1h-3zM1 2h5v1h-5zM0 3h7v1h-7z" fill="#000"/></svg>
<div style="left:618px;top:438px;width:16px;height:16px;background:#c3c3c3;"></div>
<div style="left:619px;top:439px;width:13px;height:1px;background:#fff;"></div>
<div style="left:619px;top:439px;width:1px;height:13px;background:#fff;"></div>
<div style="left:618px;top:453px;width:16px;height:1px;background:#000;"></div>
<div style="left:633px;top:438px;width:1px;height:16px;background:#000;"></div>
<div style="left:619px;top:452px;width:14px;height:1px;background:#808080;"></div>
<div style="left:632px;top:439px;width:1px;height:14px;background:#808080;"></div>
<svg style="left:622px;top:444px" width="7" height="4" viewBox="0 0 7 4" shape-rendering="crispEdges"><path d="M0 0h7v1h-7zM1 1h5v1h-5zM2 2h3v1h-3zM3 3h1v1h-1z" fill="#000"/></svg>
<div style="left:618px;top:414px;width:16px;height:24px;background:#c3c3c3;"></div>
<div style="left:619px;top:415px;width:13px;height:1px;background:#fff;"></div>
<div style="left:619px;top:415px;width:1px;height:21px;background:#fff;"></div>
<div style="left:618px;top:437px;width:16px;height:1px;background:#000;"></div>
<div style="left:633px;top:414px;width:1px;height:24px;background:#000;"></div>
<div style="left:619px;top:436px;width:14px;height:1px;background:#808080;"></div>
<div style="left:632px;top:415px;width:1px;height:22px;background:#808080;"></div>
<div style="left:5px;top:458px;width:150px;height:1px;background:#808080;"></div>
<div style="left:5px;top:458px;width:1px;height:17px;background:#808080;"></div>
<div style="left:5px;top:474px;width:150px;height:1px;background:#fff;"></div>
<div style="left:154px;top:458px;width:1px;height:17px;background:#fff;"></div>
<div style="left:157px;top:458px;width:78px;height:1px;background:#808080;"></div>
<div style="left:157px;top:458px;width:1px;height:17px;background:#808080;"></div>
<div style="left:157px;top:474px;width:78px;height:1px;background:#fff;"></div>
<div style="left:234px;top:458px;width:1px;height:17px;background:#fff;"></div>
<div style="left:237px;top:458px;width:399px;height:1px;background:#808080;"></div>
<div style="left:237px;top:458px;width:1px;height:17px;background:#808080;"></div>
<div style="left:237px;top:474px;width:399px;height:1px;background:#fff;"></div>
<div style="left:635px;top:458px;width:1px;height:17px;background:#fff;"></div>
<span class="t" style="left:7.50px;top:458.50px;font-size:13px;color:#000;transform:scale(0.8117,1.0);transform-origin:0 0;">Volné místo na disku:</span>
<span class="t" style="left:196.50px;top:458.50px;font-size:13px;color:#000;transform:scale(0.8368,1.0);transform-origin:0 0;">334303</span>
<span class="t" style="left:240.50px;top:458.50px;font-size:13px;color:#000;transform:scale(0.8108,1.0);transform-origin:0 0;">kB</span>
<svg style="left:622px;top:461px" width="13" height="13" viewBox="0 0 13 13"><path d="M13 .300L.300 13M13 4.300L4.300 13M13 8.300L8.300 13" stroke="#fff" stroke-width="1.500" fill="none"/><path d="M13 1.800L1.800 13M13 5.800L5.800 13M13 9.800L9.800 13" stroke="#808080" stroke-width="1.700" fill="none"/></svg>
</div></body></html>
